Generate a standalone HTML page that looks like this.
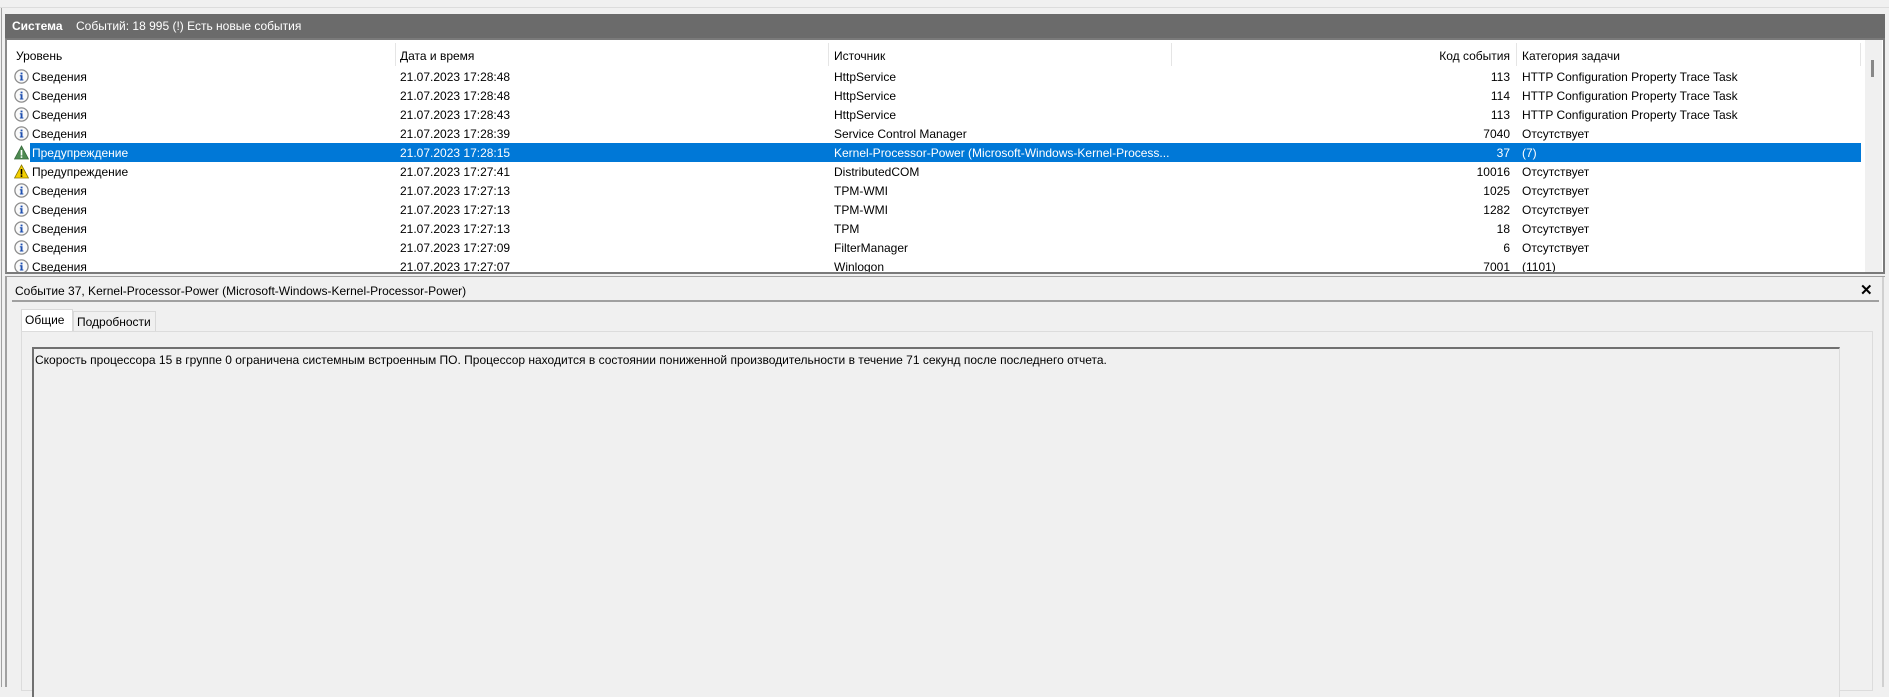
<!DOCTYPE html>
<html><head><meta charset="utf-8"><style>
*{margin:0;padding:0;box-sizing:border-box}
body{width:1889px;height:687px;background:#f0f0f0;font-family:"Liberation Sans","Segoe UI",sans-serif;font-size:12px;color:#000;position:relative;overflow:hidden}
.a{position:absolute;white-space:nowrap}
.row{position:absolute;left:8px;width:1857px;height:19px}
.row span{position:absolute;top:3px;white-space:nowrap}
.sel{background:#0078d7;color:#fff}
.ic{position:absolute;left:6px;top:2px;width:15px;height:15px}
</style></head><body>
<div class="a" style="left:0;top:7px;width:1889px;height:1px;background:#dcdcdc"></div>
<div class="a" style="left:1px;top:8px;width:1px;height:679px;background:#a0a0a0"></div>
<div class="a" style="left:5px;top:14px;width:1880px;height:24px;background:#6b6b6b"></div>
<div class="a" style="left:12px;top:19px;color:#fff;font-weight:bold">Система</div>
<div class="a" style="left:76px;top:19px;color:#fff">Событий: 18 995 (!) Есть новые события</div>
<div class="a" style="left:5px;top:38px;width:1880px;height:236px;border:2px solid #7a7a7a;border-left-color:#8a8a8a;background:#fff"></div>
<div class="a" style="left:1865px;top:40px;width:17px;height:232px;background:#f0f0f0"></div>
<div class="a" style="left:1871px;top:60px;width:3px;height:17px;background:#888"></div>
<div class="a" style="left:395px;top:43px;width:1px;height:23px;background:#e5e5e5"></div>
<div class="a" style="left:828px;top:43px;width:1px;height:23px;background:#e5e5e5"></div>
<div class="a" style="left:1171px;top:43px;width:1px;height:23px;background:#e5e5e5"></div>
<div class="a" style="left:1516px;top:43px;width:1px;height:23px;background:#e5e5e5"></div>
<div class="a" style="left:1860px;top:43px;width:1px;height:23px;background:#e5e5e5"></div>
<div class="a" style="left:16px;top:49px">Уровень</div>
<div class="a" style="left:400px;top:49px">Дата и время</div>
<div class="a" style="left:834px;top:49px">Источник</div>
<div class="a" style="left:1510px;top:49px;transform:translateX(-100%)">Код события</div>
<div class="a" style="left:1522px;top:49px">Категория задачи</div>
<svg width="0" height="0" style="position:absolute"><defs>
<g id="i"><circle cx="7.5" cy="7.5" r="6.6" fill="#fafafa" stroke="#8c8c8c" stroke-width="1.3"/><rect x="6.6" y="6.3" width="1.9" height="5" fill="#2050b0"/><rect x="5.8" y="6.3" width="2.6" height="1" fill="#2050b0"/><rect x="5.8" y="10.5" width="3.6" height="1" fill="#2050b0"/><rect x="6.6" y="3.6" width="1.9" height="1.8" fill="#2050b0"/></g>
<g id="w"><path d="M7.5 1 L14.5 14 L0.5 14 Z" fill="#f5d000" stroke="#8a7a00" stroke-width="0.8"/><rect x="6.7" y="5" width="1.6" height="5.5" fill="#000"/><rect x="6.7" y="11.3" width="1.6" height="1.6" fill="#000"/></g>
<g id="wg"><path d="M7.5 1 L14.5 14 L0.5 14 Z" fill="#4e8a52" stroke="#3a6b3e" stroke-width="0.8"/><rect x="6.7" y="5" width="1.6" height="5.5" fill="#fff"/><rect x="6.7" y="11.3" width="1.6" height="1.6" fill="#fff"/></g>
</defs></svg>
<div class="row" style="top:67px"><svg class="ic"><use href="#i"/></svg><span style="left:24px">Сведения</span><span style="left:392px">21.07.2023 17:28:48</span><span style="left:826px">HttpService</span><span style="right:355px">113</span><span style="left:1514px">HTTP Configuration Property Trace Task</span></div>
<div class="row" style="top:86px"><svg class="ic"><use href="#i"/></svg><span style="left:24px">Сведения</span><span style="left:392px">21.07.2023 17:28:48</span><span style="left:826px">HttpService</span><span style="right:355px">114</span><span style="left:1514px">HTTP Configuration Property Trace Task</span></div>
<div class="row" style="top:105px"><svg class="ic"><use href="#i"/></svg><span style="left:24px">Сведения</span><span style="left:392px">21.07.2023 17:28:43</span><span style="left:826px">HttpService</span><span style="right:355px">113</span><span style="left:1514px">HTTP Configuration Property Trace Task</span></div>
<div class="row" style="top:124px"><svg class="ic"><use href="#i"/></svg><span style="left:24px">Сведения</span><span style="left:392px">21.07.2023 17:28:39</span><span style="left:826px">Service Control Manager</span><span style="right:355px">7040</span><span style="left:1514px">Отсутствует</span></div>
<div class="row" style="top:143px"><div class="sel" style="position:absolute;left:22px;top:0;right:4px;height:19px"></div><svg class="ic"><use href="#wg"/></svg><span style="left:24px;color:#fff">Предупреждение</span><span style="left:392px;color:#fff">21.07.2023 17:28:15</span><span style="left:826px;color:#fff">Kernel-Processor-Power (Microsoft-Windows-Kernel-Process...</span><span style="right:355px;color:#fff">37</span><span style="left:1514px;color:#fff">(7)</span></div>
<div class="row" style="top:162px"><svg class="ic"><use href="#w"/></svg><span style="left:24px">Предупреждение</span><span style="left:392px">21.07.2023 17:27:41</span><span style="left:826px">DistributedCOM</span><span style="right:355px">10016</span><span style="left:1514px">Отсутствует</span></div>
<div class="row" style="top:181px"><svg class="ic"><use href="#i"/></svg><span style="left:24px">Сведения</span><span style="left:392px">21.07.2023 17:27:13</span><span style="left:826px">TPM-WMI</span><span style="right:355px">1025</span><span style="left:1514px">Отсутствует</span></div>
<div class="row" style="top:200px"><svg class="ic"><use href="#i"/></svg><span style="left:24px">Сведения</span><span style="left:392px">21.07.2023 17:27:13</span><span style="left:826px">TPM-WMI</span><span style="right:355px">1282</span><span style="left:1514px">Отсутствует</span></div>
<div class="row" style="top:219px"><svg class="ic"><use href="#i"/></svg><span style="left:24px">Сведения</span><span style="left:392px">21.07.2023 17:27:13</span><span style="left:826px">TPM</span><span style="right:355px">18</span><span style="left:1514px">Отсутствует</span></div>
<div class="row" style="top:238px"><svg class="ic"><use href="#i"/></svg><span style="left:24px">Сведения</span><span style="left:392px">21.07.2023 17:27:09</span><span style="left:826px">FilterManager</span><span style="right:355px">6</span><span style="left:1514px">Отсутствует</span></div>
<div class="row" style="top:257px;height:15px;overflow:hidden"><svg class="ic"><use href="#i"/></svg><span style="left:24px">Сведения</span><span style="left:392px">21.07.2023 17:27:07</span><span style="left:826px">Winlogon</span><span style="right:355px">7001</span><span style="left:1514px">(1101)</span></div>
<div class="a" style="left:5px;top:276px;width:1880px;height:1px;background:#a0a0a0"></div>
<div class="a" style="left:5px;top:277px;width:2px;height:410px;background:#a0a0a0"></div>
<div class="a" style="left:1882px;top:277px;width:2px;height:410px;background:#d0d0d0"></div>
<div class="a" style="left:15px;top:284px">Событие 37, Kernel-Processor-Power (Microsoft-Windows-Kernel-Processor-Power)</div>
<div class="a" style="left:1860px;top:281px;font-weight:bold;font-size:15px">✕</div>
<div class="a" style="left:12px;top:300px;width:1867px;height:2px;background:#a0a0a0"></div>
<div class="a" style="left:21px;top:309px;width:52px;height:23px;background:#fff;border:1px solid #d9d9d9;border-bottom:none"></div>
<div class="a" style="left:25px;top:313px">Общие</div>
<div class="a" style="left:73px;top:311px;width:83px;height:20px;background:#f0f0f0;border:1px solid #d9d9d9;border-bottom:none"></div>
<div class="a" style="left:77px;top:315px">Подробности</div>
<div class="a" style="left:21px;top:331px;width:1852px;height:360px;border:1px solid #dcdcdc;background:#f0f0f0"></div>
<div class="a" style="left:32px;top:347px;width:1808px;height:350px;border-top:2px solid #707070;border-left:2px solid #707070;border-right:1px solid #dcdcdc;background:#f0f0f0"></div>
<div class="a" style="left:35px;top:353px">Скорость процессора 15 в группе 0 ограничена системным встроенным ПО. Процессор находится в состоянии пониженной производительности в течение 71 секунд после последнего отчета.</div>
</body></html>
